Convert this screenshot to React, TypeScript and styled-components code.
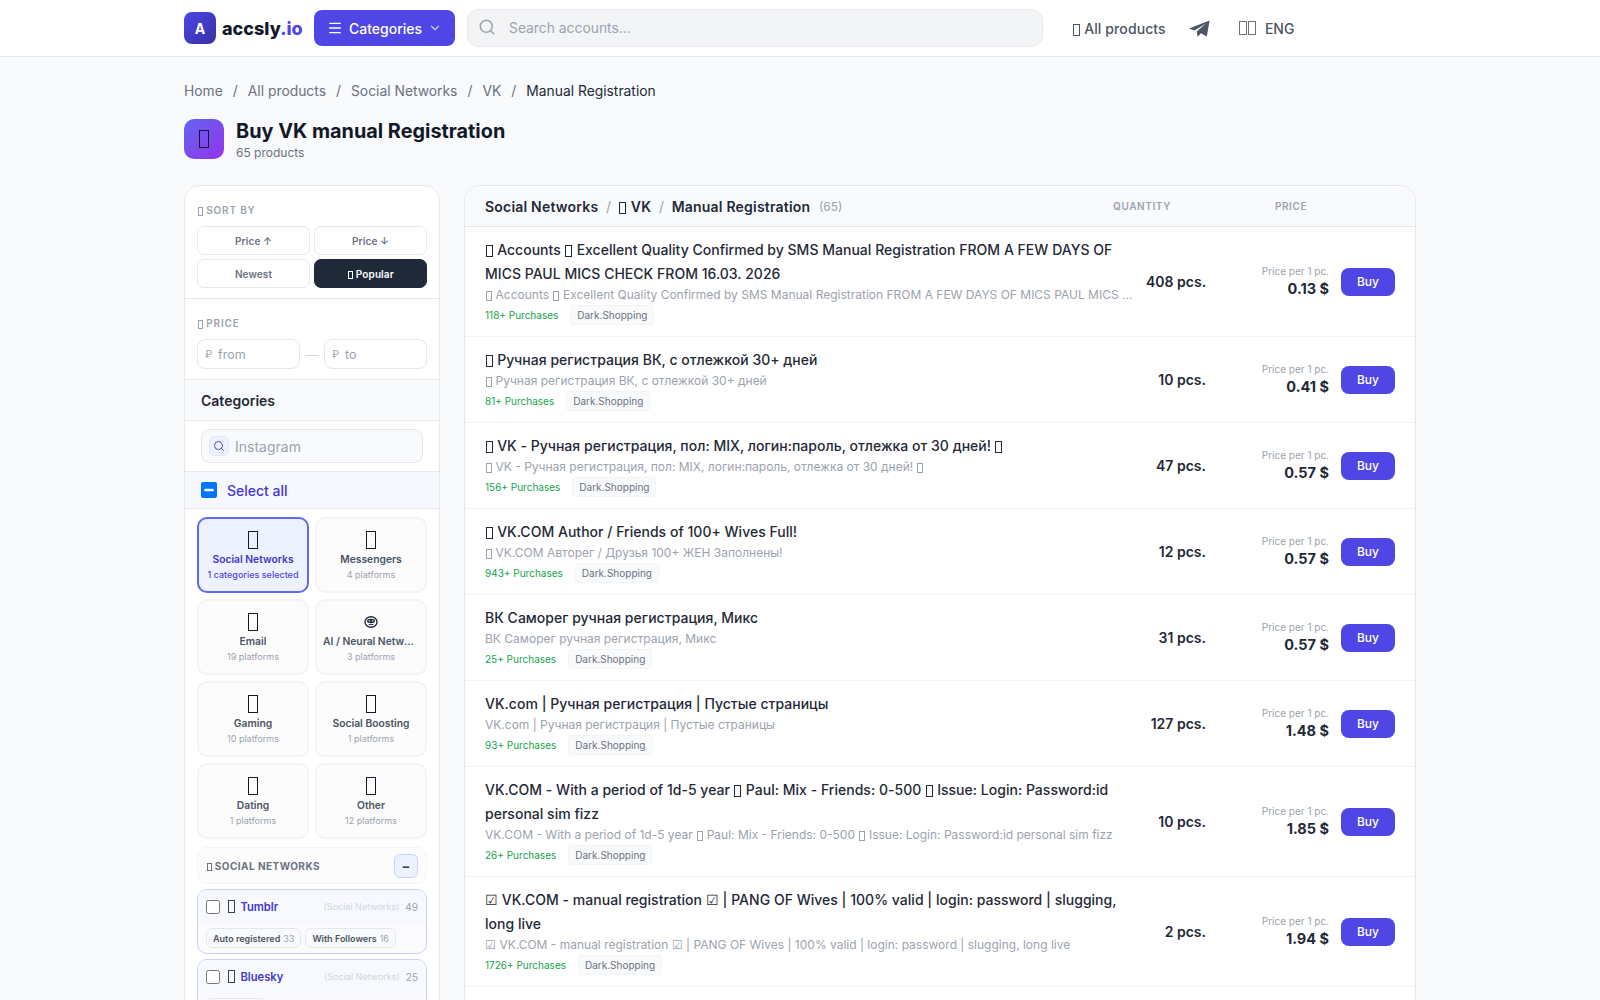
import React from 'react';
import styled, { createGlobalStyle } from 'styled-components';
import { Menu, ChevronDown, Search as SearchIcon } from 'lucide-react';

const Global = createGlobalStyle`
  html { scrollbar-width: none; }
  html::-webkit-scrollbar { display: none; }
  body { margin: 0; background: #f9fafb; font-family: Inter, "Noto Sans", sans-serif; color: #111827; }
  * { box-sizing: border-box; }
`;

const Tofu = styled.span`
  display: inline-block; flex: none; width: .5em; height: .86em; margin: 0 .05em; border: 1px solid currentColor;
  vertical-align: -.16em;
`;

const T = '\uE000';
const withTofu = (text: string) =>
  text.split(T).flatMap((part, i) => (i === 0 ? [part] : [<Tofu key={i} />, part]));

const Header = styled.header`
  height: 57px; background: #fff; border-bottom: 1px solid #e5e7eb;
`;
const HeaderInner = styled.div`
  width: 1232px; margin: 0 auto; height: 56px; display: flex; align-items: center;
`;
const Logo = styled.div`display: flex; align-items: center; gap: 6px; width: 130px;`;
const LogoMark = styled.div`
  width: 32px; height: 32px; border-radius: 8px; display: flex; align-items: center; justify-content: center;
  background: linear-gradient(135deg, #4f46e5, #3730a3); color: #fff; font-weight: 700; font-size: 14px;
`;
const LogoText = styled.div`
  font-size: 18px; font-weight: 800; color: #111827; span { color: #4f46e5; }
`;
const CategoriesButton = styled.button`
  height: 36px; width: 141px; border: 0; border-radius: 8px; background: #4f46e5; color: #fff;
  font: 500 14px Inter, sans-serif; display: flex; align-items: center; justify-content: center; gap: 6px; margin-right: 12px;
  svg:last-child { opacity: .7; }
`;
const SearchBox = styled.div`
  width: 576px; height: 38px; border-radius: 12px; background: #f3f4f6; border: 1px solid #e5e7eb;
  display: flex; align-items: center; gap: 11px; padding: 0 10px; color: #9ca3af; margin-right: 29px;
  svg { margin-top: -2px; }
`;
const SearchInput = styled.input`
  flex: 1; border: 0; outline: 0; background: transparent; font: 400 13.85px Inter, sans-serif;
  &::placeholder { color: #9ca3af; }
`;
const NavLink = styled.a`font-size: 14px; font-weight: 500; color: #4b5563; letter-spacing: .1px;`;
const TelegramLink = styled.a`display: flex; color: #4b5563; margin: 0 28px 0 23px;`;
const Lang = styled.div`display: flex; align-items: center; gap: 8px; font-size: 14px; font-weight: 500; color: #4b5563;`;
const FlagGroup = styled.span`font-size: 16px; display: flex; color: #6b7280;`;

const Page = styled.main`width: 1232px; margin: 0 auto; padding-top: 23px;`;
const Crumbs = styled.nav`display: flex; gap: 10px; font-size: 13.85px; line-height: 22px; color: #6b7280;`;
const CrumbCurrent = styled.span`color: #1f2937;`;
const TitleRow = styled.div`display: flex; align-items: flex-start; gap: 12px; margin: 17px 0 24px;`;
const TitleIcon = styled.div`
  width: 40px; height: 40px; border-radius: 10px; background: linear-gradient(135deg, #6366f1, #9333ea);
  display: flex; align-items: center; justify-content: center; font-size: 20px; color: #111827;
`;
const Title = styled.h1`margin: 0; font-size: 19.85px; font-weight: 700; line-height: 24px; color: #111827;`;
const TitleSub = styled.div`font-size: 12px; color: #6b7280; line-height: 16px; margin-top: 2px;`;

const Columns = styled.div`display: grid; grid-template-columns: 256px 952px; gap: 24px; align-items: stretch;`;

const Sidebar = styled.aside`
  background: #fff; border: 1px solid #e5e7eb; border-radius: 16px; overflow: hidden;
`;
const FilterSection = styled.section`padding: 16px 12px 10px; border-bottom: 1px solid #e5e7eb;`;
const FilterLabel = styled.div`
  font-size: 10px; font-weight: 600; letter-spacing: .8px; text-transform: uppercase; color: #9ca3af;
  line-height: 16px; margin-bottom: 8px;
`;
const SortGrid = styled.div`display: grid; grid-template-columns: 1fr 1fr; gap: 4px;`;
const SortButton = styled.button<{ $active?: boolean }>`
  height: 29px; border-radius: 7px; font: 600 10px Inter, sans-serif; letter-spacing: .1px;
  border: 1px solid ${p => (p.$active ? '#1f2937' : '#e5e7eb')};
  background: ${p => (p.$active ? '#1f2937' : '#fff')};
  color: ${p => (p.$active ? '#fff' : '#6b7280')};
`;
const PriceRow = styled.div`display: flex; align-items: center; gap: 6px;`;
const PriceField = styled.label`
  flex: 1; height: 30px; border: 1px solid #e5e7eb; border-radius: 8px; display: flex; align-items: center;
  gap: 4px; padding: 0 7px; color: #9ca3af; font-size: 10px;
`;
const PriceInput = styled.input`
  width: 60px; border: 0; outline: 0; font: 400 12.5px Inter, sans-serif;
  &::placeholder { color: #9ca3af; }
`;
const Dash = styled.span`color: #d1d5db; font-size: 12px;`;
const CatHeader = styled.div`
  height: 41px; background: #f9fafb; border-bottom: 1px solid #e5e7eb; display: flex; align-items: center;
  padding: 0 16px; font-size: 14px; font-weight: 600; color: #1f2937;
`;
const CatSearchWrap = styled.div`padding: 8px 16px; border-bottom: 1px solid #e5e7eb;`;
const CatSearch = styled.div`
  height: 34px; border: 1px solid #e5e7eb; border-radius: 8px; background: #f9fafb; display: flex; align-items: center;
  gap: 4px; padding: 0 7px;
`;
const CatSearchIcon = styled.div`
  width: 20px; height: 20px; border-radius: 6px; background: #eef2ff; color: #4f46e5; border: 1px solid #e0e7ff;
  display: flex; align-items: center; justify-content: center;
`;
const CatSearchInput = styled.input`
  flex: 1; min-width: 0; border: 0; outline: 0; background: transparent; font: 400 14px Inter, sans-serif;
  &::placeholder { color: #9ca3af; }
`;
const SelectAll = styled.label`
  height: 37px; display: flex; align-items: center; gap: 10px; padding: 0 16px; background: #f6f8fe;
  border-bottom: 1px solid #e5e7eb; font-size: 14px; font-weight: 500; color: #4338ca;
  input { width: 16px; height: 16px; margin: 0; }
`;
const CardGrid = styled.div`display: grid; grid-template-columns: 1fr 1fr; gap: 6px; padding: 8px 12px;`;
const CatCard = styled.div<{ $active?: boolean }>`
  height: 76px; min-width: 0; border-radius: 10px; border: 2px solid ${p => (p.$active ? '#6366f1' : '#f3f4f6')};
  background: ${p => (p.$active ? '#eef2ff' : '#fcfcfd')}; display: flex; flex-direction: column; align-items: center;
  padding: 10px 6px 0; text-align: center;
`;
const CatEmoji = styled.div`
  font-size: 20px; line-height: 22px; height: 22px; color: #111827; display: flex; align-items: center;
`;
const CatName = styled.div<{ $active?: boolean }>`
  font-size: 10.3px; font-weight: 600; line-height: 14px; margin-top: 1px; max-width: 100%;
  white-space: nowrap; overflow: hidden; text-overflow: ellipsis; color: ${p => (p.$active ? '#4338ca' : '#4b5563')};
`;
const CatCount = styled.div<{ $active?: boolean }>`
  font-size: 9px; line-height: 12px; margin-top: 3px; white-space: nowrap; font-weight: ${p => (p.$active ? 500 : 400)};
  color: ${p => (p.$active ? '#4f46e5' : '#9ca3af')};
`;
const PlatformArea = styled.div`padding: 0 12px 12px; display: flex; flex-direction: column; gap: 5px;`;
const SectionHead = styled.div`
  height: 37px; border: 1px solid #f3f4f6; border-radius: 10px; background: #fcfcfd; display: flex; align-items: center;
  justify-content: space-between; padding: 0 8px; font-size: 10px; font-weight: 700; letter-spacing: .45px;
  color: #6b7280; text-transform: uppercase;
`;
const CollapseButton = styled.button`
  width: 24px; height: 24px; border-radius: 6px; border: 1px solid #c7d2fe; background: #eef2ff; color: #374151;
  font: 700 13px Inter, sans-serif; padding: 0;
`;
const PlatformCard = styled.div`border: 1px solid #c7d2fe; border-radius: 10px; background: #fbfbff; overflow: hidden;`;
const PlatformHead = styled.div`
  height: 33px; background: #f8f9fe; display: flex; align-items: center; padding: 0 8px;
  input { width: 14px; height: 14px; margin: 0 7px 0 0; }
`;
const PlatformEmoji = styled.span`font-size: 14px; margin-right: 5px; color: #374151; display: flex;`;
const PlatformName = styled.span`font-size: 11.2px; font-weight: 600; color: #4338ca; flex: 1;`;
const PlatformGroup = styled.span`font-size: 9px; color: #d1d5db; margin-right: 6px;`;
const PlatformCount = styled.span`font-size: 10px; color: #9ca3af;`;
const TagRow = styled.div`display: flex; gap: 4px; padding: 5px 8px 5px;`;
const Tag = styled.span`
  height: 20px; display: inline-flex; align-items: center; gap: 3px; padding: 0 6px; border-radius: 6px;
  border: 1px solid #e5e7eb; background: #f9fafb; font-size: 9px; font-weight: 600; color: #4b5563;
  em { font-style: normal; font-weight: 400; color: #9ca3af; }
`;

const Main = styled.section`background: #fff; border: 1px solid #e5e7eb; border-radius: 16px; overflow: hidden;`;
const MainHead = styled.div`
  height: 41px; background: #f9fafb; border-bottom: 1px solid #e5e7eb; display: grid; align-items: center;
  grid-template-columns: 1fr 120px 120px; column-gap: 29px; padding: 0 64px 0 20px;
`;
const HeadPath = styled.div`display: flex; align-items: center; gap: 7.6px; font-size: 14px; font-weight: 600; letter-spacing: .2px; color: #1f2937;`;
const HeadSep = styled.span`font-weight: 400; color: #9ca3af;`;
const HeadCount = styled.span`font-size: 12px; font-weight: 400; color: #9ca3af; margin-left: 1px; letter-spacing: 0;`;
const HeadCol = styled.div`
  text-align: center; font-size: 10px; font-weight: 600; letter-spacing: .6px; color: #9ca3af; text-transform: uppercase;
`;
const Row = styled.article`
  display: grid; grid-template-columns: minmax(0, 1fr) 60px 111px 54px; column-gap: 12px; align-items: center;
  padding: 11px 20px 11px; border-bottom: 1px solid #f3f4f6;
`;
const RowBody = styled.div`min-width: 0;`;
const RowTitle = styled.div`font-size: 14px; font-weight: 500; line-height: 24px; color: #1f2937; letter-spacing: .02px;`;
const RowSub = styled.div`
  font-size: 12px; line-height: 18px; color: #9ca3af; white-space: nowrap; overflow: hidden; text-overflow: ellipsis;
`;
const RowMeta = styled.div`display: flex; align-items: center; gap: 12px; margin-top: 1px;`;
const Purchases = styled.span`font-size: 10px; color: #16a34a;`;
const Seller = styled.span`
  height: 20px; display: inline-flex; align-items: center; padding: 0 6px; border-radius: 4px; background: #f9fafb;
  border: 1px solid #f3f4f6; font-size: 10px; color: #6b7280;
`;
const Qty = styled.div`text-align: right; font-size: 14px; font-weight: 600; color: #1f2937; white-space: nowrap;`;
const PriceCol = styled.div`text-align: right;`;
const PriceNote = styled.div`font-size: 10px; line-height: 14px; color: #9ca3af;`;
const PriceValue = styled.div`font-size: 14.5px; font-weight: 700; line-height: 20px; color: #1f2937; margin-top: 1px;`;
const BuyButton = styled.button`
  width: 54px; height: 28px; border: 0; border-radius: 8px; background: #4f46e5; color: #fff; font: 500 12px Inter, sans-serif; padding: 0;
`;

const TelegramGlyph = () => (
  <svg width="21" height="17" viewBox="0 0 21 17" fill="currentColor" aria-hidden="true">
    <path d="M0 8.6 20.6 0.4 17.8 16.4 12 13.2 8.6 16.8 7.8 11.4 16.8 3.4 5.6 10.6Z" />
  </svg>
);

const RobotGlyph = () => (
  <svg width="14" height="12" viewBox="0 0 14 12" fill="none" aria-hidden="true">
    <ellipse cx="7" cy="6" rx="6" ry="5.2" stroke="#1f2937" strokeWidth="1.4" />
    <ellipse cx="7" cy="5" rx="4" ry="2.2" fill="#1f2937" />
    <circle cx="5.4" cy="5" r=".8" fill="#fff" />
    <circle cx="8.6" cy="5" r=".8" fill="#fff" />
    <path d="M4.6 8.6h4.8" stroke="#1f2937" strokeWidth="1" />
  </svg>
);

const cats = [
  { n: 'Social Networks', c: '1 categories selected', active: true },
  { n: 'Messengers', c: '4 platforms' },
  { n: 'Email', c: '19 platforms' },
  { n: 'AI / Neural Networks', c: '3 platforms', robot: true },
  { n: 'Gaming', c: '10 platforms' },
  { n: 'Social Boosting', c: '1 platforms' },
  { n: 'Dating', c: '1 platforms' },
  { n: 'Other', c: '12 platforms' },
];

const rows: { t: string; s?: string; p: string; q: string; v: string }[] = [
  { t: `${T} Accounts ${T} Excellent Quality Confirmed by SMS Manual Registration FROM A FEW DAYS OF MICS PAUL MICS CHECK FROM 16.03. 2026`, p: '118+', q: '408', v: '0.13' },
  { t: `${T} Ручная регистрация ВК, с отлежкой 30+ дней`, p: '81+', q: '10', v: '0.41' },
  { t: `${T} VK - Ручная регистрация, пол: MIX, логин:пароль, отлежка от 30 дней! ${T}`, p: '156+', q: '47', v: '0.57' },
  { t: `${T} VK.COM Author / Friends of 100+ Wives Full!`, s: `${T} VK.COM Авторег / Друзья 100+ ЖЕН Заполнены!`, p: '943+', q: '12', v: '0.57' },
  { t: 'ВК Саморег ручная регистрация, Микс', p: '25+', q: '31', v: '0.57' },
  { t: 'VK.com | Ручная регистрация | Пустые страницы', p: '93+', q: '127', v: '1.48' },
  { t: `VK.COM - With a period of 1d-5 year ${T} Paul: Mix - Friends: 0-500 ${T} Issue: Login: Password:id personal sim fizz`, p: '26+', q: '10', v: '1.85' },
  { t: '☑ VK.COM - manual registration ☑ | PANG OF Wives | 100% valid | login: password | slugging, long live', p: '1726+', q: '2', v: '1.94' },
];

export default function App() {
  return (
    <>
      <Global />
      <Header>
        <HeaderInner>
          <Logo>
            <LogoMark>A</LogoMark>
            <LogoText>accsly<span>.io</span></LogoText>
          </Logo>
          <CategoriesButton>
            <Menu size={16} />
            Categories
            <ChevronDown size={14} />
          </CategoriesButton>
          <SearchBox>
            <SearchIcon size={18} />
            <SearchInput placeholder="Search accounts..." />
          </SearchBox>
          <NavLink><Tofu /> All products</NavLink>
          <TelegramLink><TelegramGlyph /></TelegramLink>
          <Lang><FlagGroup><Tofu /><Tofu /></FlagGroup><span>ENG</span></Lang>
        </HeaderInner>
      </Header>
      <Page>
        <Crumbs>
          <span>Home</span><span>/</span><span>All products</span><span>/</span><span>Social Networks</span><span>/</span><span>VK</span><span>/</span>
          <CrumbCurrent>Manual Registration</CrumbCurrent>
        </Crumbs>
        <TitleRow>
          <TitleIcon><Tofu /></TitleIcon>
          <div>
            <Title>Buy VK manual Registration</Title>
            <TitleSub>65 products</TitleSub>
          </div>
        </TitleRow>
        <Columns>
          <Sidebar>
            <FilterSection>
              <FilterLabel><Tofu /> Sort by</FilterLabel>
              <SortGrid>
                <SortButton>Price ↑</SortButton>
                <SortButton>Price ↓</SortButton>
                <SortButton>Newest</SortButton>
                <SortButton $active><Tofu /> Popular</SortButton>
              </SortGrid>
            </FilterSection>
            <FilterSection>
              <FilterLabel><Tofu /> Price</FilterLabel>
              <PriceRow>
                <PriceField>₽<PriceInput placeholder="from" /></PriceField>
                <Dash>—</Dash>
                <PriceField>₽<PriceInput placeholder="to" /></PriceField>
              </PriceRow>
            </FilterSection>
            <CatHeader>Categories</CatHeader>
            <CatSearchWrap>
              <CatSearch>
                <CatSearchIcon><SearchIcon size={12} /></CatSearchIcon>
                <CatSearchInput placeholder="Instagram" />
              </CatSearch>
            </CatSearchWrap>
            <SelectAll>
              <input type="checkbox" ref={el => { if (el) el.indeterminate = true; }} />
              Select all
            </SelectAll>
            <CardGrid>
              {cats.map(c => (
                <CatCard key={c.n} $active={c.active}>
                  <CatEmoji>{c.robot ? <RobotGlyph /> : <Tofu />}</CatEmoji>
                  <CatName $active={c.active}>{c.n}</CatName>
                  <CatCount $active={c.active}>{c.c}</CatCount>
                </CatCard>
              ))}
            </CardGrid>
            <PlatformArea>
              <SectionHead>
                <span><Tofu /> Social Networks</span>
                <CollapseButton>−</CollapseButton>
              </SectionHead>
              <PlatformCard>
                <PlatformHead>
                  <input type="checkbox" />
                  <PlatformEmoji><Tofu /></PlatformEmoji>
                  <PlatformName>Tumblr</PlatformName>
                  <PlatformGroup>(Social Networks)</PlatformGroup>
                  <PlatformCount>49</PlatformCount>
                </PlatformHead>
                <TagRow>
                  <Tag>Auto registered <em>33</em></Tag>
                  <Tag>With Followers <em>16</em></Tag>
                </TagRow>
              </PlatformCard>
              <PlatformCard>
                <PlatformHead>
                  <input type="checkbox" />
                  <PlatformEmoji><Tofu /></PlatformEmoji>
                  <PlatformName>Bluesky</PlatformName>
                  <PlatformGroup>(Social Networks)</PlatformGroup>
                  <PlatformCount>25</PlatformCount>
                </PlatformHead>
                <TagRow>
                  <Tag>Manual <em>25</em></Tag>
                </TagRow>
              </PlatformCard>
            </PlatformArea>
          </Sidebar>
          <Main>
            <MainHead>
              <HeadPath>
                Social Networks <HeadSep>/</HeadSep> <span><Tofu /> VK</span> <HeadSep>/</HeadSep> Manual Registration
                <HeadCount>(65)</HeadCount>
              </HeadPath>
              <HeadCol>Quantity</HeadCol>
              <HeadCol>Price</HeadCol>
            </MainHead>
            {rows.map(r => (
              <Row key={r.t}>
                <RowBody>
                  <RowTitle>{withTofu(r.t)}</RowTitle>
                  <RowSub>{withTofu(r.s ?? r.t)}</RowSub>
                  <RowMeta>
                    <Purchases>{r.p} Purchases</Purchases>
                    <Seller>Dark.Shopping</Seller>
                  </RowMeta>
                </RowBody>
                <Qty>{r.q} pcs.</Qty>
                <PriceCol>
                  <PriceNote>Price per 1 pc.</PriceNote>
                  <PriceValue>{r.v} $</PriceValue>
                </PriceCol>
                <BuyButton>Buy</BuyButton>
              </Row>
            ))}
          </Main>
        </Columns>
      </Page>
    </>
  );
}
